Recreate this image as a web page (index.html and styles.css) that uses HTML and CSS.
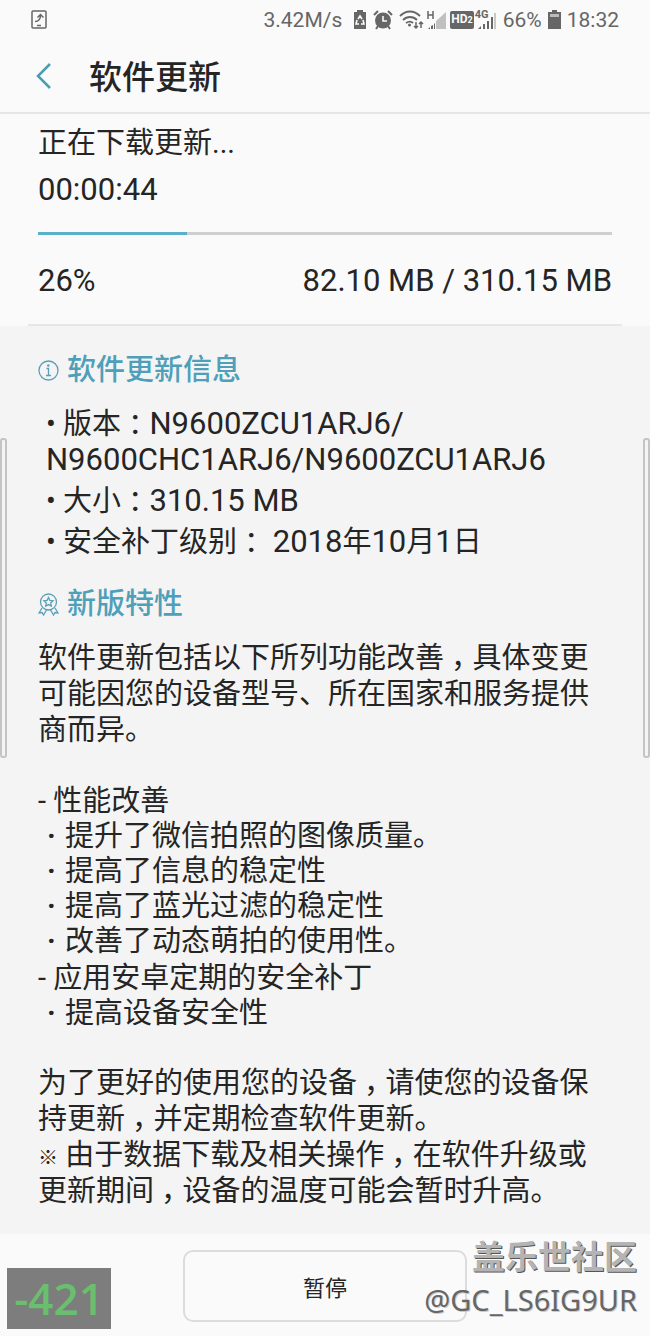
FILE: index.html
```html
<!DOCTYPE html>
<html lang="zh-CN">
<head>
    <meta charset="UTF-8">
    <meta name="viewport" content="width=device-width, initial-scale=1.0">
    <title>软件更新</title>
    <link rel="stylesheet" href="styles.css">
</head>
<body>
    <div class="status-bar">
        <svg class="status-left" width="16" height="20" viewBox="0 0 16 20" fill="none" stroke="#666" stroke-width="1.5">
            <rect x="1" y="1" width="14" height="17" rx="1"/>
            <path d="M4 11.500c4 0 5.500-2 5.500-6.500M6.500 7.500l3-3 3 3M6 15.500h4"/>
        </svg>
        <span>3.42M/s</span>
        <svg class="battery-saver" width="14" height="20" viewBox="0 0 14 20">
            <path fill="#666" d="M4 0h6v2h3v17H1V2h3z"/>
            <path fill="none" stroke="#fafafa" stroke-width="1.6" d="M5 9l2-3 2 3M4 10l-1 4h3M10 10l1 4H8"/>
        </svg>
        <svg class="alarm" width="20" height="20" viewBox="0 0 20 20">
            <circle cx="10" cy="10.500" r="8" fill="#666"/>
            <path fill="none" stroke="#666" stroke-width="2" d="M1 5l4-4M19 5l-4-4M5 16l-2 3M15 16l2 3"/>
            <path fill="none" stroke="#fafafa" stroke-width="1.6" d="M10 6v5h4"/>
        </svg>
        <svg class="wifi" width="25" height="20" viewBox="0 0 25 20" fill="none" stroke="#666" stroke-width="1.8">
            <path d="M1 6c6-6 14-6 20 0M4 10c4-4 10-4 14 0M7 13c3-2 5-2 7 0"/>
            <circle cx="10.500" cy="15" r="1.500" fill="#666" stroke="none"/>
            <path stroke-width="1.500" d="M17 12v6M15 16l2 2 2-2M22 18v-6M20 14l2-2 2 2"/>
        </svg>
        <svg class="signal-h" width="21" height="20" viewBox="0 0 21 20">
            <path fill="none" stroke="#666" stroke-width="1.5" d="M2 1v8M7 1v8M2 5h5"/>
            <path fill="#666" d="M2 19l2-2v2zM5 19v-3l2-1v4zM8 19v-5l1-1v6z"/>
            <path fill="#c0c0c0" d="M10 19V11L20 2v17z"/>
        </svg>
        <span class="hd">HD<small>2</small></span>
        <span class="net">
            <span class="net-label">4G</span>
            <svg width="22" height="20" viewBox="0 0 22 20">
                <path fill="#666" d="M3 19l3-3v3zM8 19v-5h2v5zM12 19v-8h2v8zM16 19V7h2v12z"/>
                <path fill="#c8c8c8" d="M19 19V3h2v16z"/>
            </svg>
        </span>
        <span class="percent">66%</span>
        <svg class="battery" width="13" height="20" viewBox="0 0 13 20">
            <path fill="#666" d="M4 0h5v2h4v17H0V2h4z"/>
            <path fill="#bbb" d="M2 4h9v3H2z"/>
        </svg>
        <span>18:32</span>
    </div>

    <header>
        <a href="#" class="back" aria-label="返回">
            <svg width="16" height="26" viewBox="0 0 16 26" fill="none" stroke="#4a9cb0" stroke-width="2.500"><path d="M14 1L2 13l12 12"/></svg>
        </a>
        <h1>软件更新</h1>
    </header>

    <section class="download">
        <div class="state">正在下载更新...</div>
        <div class="time">00:00:44</div>
        <div class="progress"><div class="progress-fill" style="width: 26%"></div></div>
        <div class="amounts">
            <span>26%</span>
            <span>82.10 MB / 310.15 MB</span>
        </div>
    </section>

    <main>
        <h2>
            <svg width="21" height="21" viewBox="0 0 21 21" fill="none" stroke="#5a9fb8" stroke-width="1.3">
                <circle cx="10.500" cy="10.500" r="9.500"/>
                <path d="M8.500 8.500h2v7M8 15.500h5"/>
                <circle cx="10.300" cy="5.500" r=".6" fill="#5a9fb8"/>
            </svg>
            软件更新信息
        </h2>
        <ul class="info">
            <li>• 版本<span class="punct">：</span><span class="num">N9600ZCU1ARJ6/</span><br><span class="num">N9600CHC1ARJ6/N9600ZCU1ARJ6</span></li>
            <li>• 大小<span class="punct">：</span><span class="num">310.15 MB</span></li>
            <li>• 安全补丁级别<span class="punct">：</span> <span class="num">2018</span>年<span class="num">10</span>月<span class="num">1</span>日</li>
        </ul>

        <h2>
            <svg width="21" height="23" viewBox="0 0 21 23" fill="none" stroke="#5a9fb8" stroke-width="1.3">
                <circle cx="10.500" cy="9" r="8"/>
                <path d="M10.500 4.500l1.400 2.900 3.100.4-2.300 2.200.6 3.100-2.800-1.500-2.800 1.500.6-3.100L6 7.800l3.100-.4z"/>
                <path d="M4 15l-3 5 3-.5L5.500 22l3-5M17 15l3 5-3-.5-1.500 2.500-3-5"/>
            </svg>
            新版特性
        </h2>
        <p>软件更新包括以下所列功能改善<span class="punct">，</span>具体变更可能因您的设备型号、所在国家和服务提供商而异。</p>
        <div class="changes">
            <h3>- 性能改善</h3>
            <ul>
                <li>提升了微信拍照的图像质量。</li>
                <li>提高了信息的稳定性</li>
                <li>提高了蓝光过滤的稳定性</li>
                <li>改善了动态萌拍的使用性。</li>
            </ul>
        </div>
        <div class="changes">
            <h3>- 应用安卓定期的安全补丁</h3>
            <ul>
                <li>提高设备安全性</li>
            </ul>
        </div>
        <p class="note">为了更好的使用您的设备<span class="punct">，</span>请使您的设备保持更新<span class="punct">，</span>并定期检查软件更新。<br><span class="mark">※</span> 由于数据下载及相关操作<span class="punct">，</span>在软件升级或更新期间<span class="punct">，</span>设备的温度可能会暂时升高。</p>
    </main>

    <footer>
        <button type="button">暂停</button>
        <div class="counter">-421</div>
        <div class="watermark">
            <div class="site">盖乐世社区</div>
            <div class="user">@GC_LS6IG9UR</div>
        </div>
    </footer>

    <div class="edge edge-left"></div>
    <div class="edge edge-right"></div>
</body>
</html>
```
FILE: styles.css
```css
* {
    box-sizing: border-box;
}
body {
    margin: 0;
    position: relative;
    overflow-x: hidden;
    background: #fafafa;
    color: #252525;
    font-family: Roboto, "Noto Sans CJK SC", sans-serif;
    font-size: 29px;
    line-height: 36px;
}
h1, h2, h3, p, ul {
    margin: 0;
    padding: 0;
}
ul {
    list-style: none;
}
svg {
    display: block;
    flex: none;
}

/* Status bar */
.status-bar {
    display: flex;
    align-items: center;
    height: 40px;
    padding: 0 31px;
    font-size: 21px;
    color: #666;
}
.status-left {
    margin-right: auto;
}
.battery-saver {
    margin-left: 11px;
}
.alarm {
    margin-left: 6px;
}
.wifi {
    margin-left: 6px;
}
.signal-h {
    margin-left: 2px;
}
.hd {
    margin-left: 3px;
    padding: 0 1px;
    border-radius: 2px;
    background: #666;
    color: #fafafa;
    font-size: 12px;
    font-weight: bold;
    line-height: 17px;
}
.hd small {
    font-size: 9px;
}
.net {
    position: relative;
    margin-left: 1px;
}
.net-label {
    position: absolute;
    top: 0;
    left: 0;
    font-size: 11px;
    font-weight: bold;
    line-height: 10px;
}
.percent {
    margin: 0 6px;
}
.battery {
    margin-right: 6px;
}

/* Title */
header {
    display: flex;
    align-items: center;
    height: 74px;
    padding-left: 36px;
    border-bottom: 2px solid #e6e6e6;
}
.back {
    width: 53px;
}
h1 {
    padding-top: 4px;
    font-size: 33px;
    font-weight: 500;
}

/* Download progress */
.download {
    margin: 0 28px;
    padding: 11px 10px 0;
    height: 212px;
    border-bottom: 2px solid #e6e6e6;
}
.time, .amounts, .num {
    font-size: 31px;
}
.time {
    margin-top: 11px;
}
.progress {
    height: 3px;
    margin: 24px 0 28px;
    background: #cfcfcf;
}
.progress-fill {
    height: 3px;
    background: #5bb0c9;
}
.amounts {
    display: flex;
    justify-content: space-between;
}

/* Update details */
main {
    padding: 26px 38px 25px;
    background: #f4f4f4;
}
h2 {
    display: flex;
    align-items: center;
    gap: 8px;
    font-size: 29px;
    font-weight: 500;
    color: #4f9fb9;
}
.info {
    padding-left: 8px;
    margin: 18px 0 26px;
}
.info li {
    margin-bottom: 5px;
}
/* half-width punctuation centred in a full-width cell */
.punct {
    padding: 0 7px;
    font-family: "Noto Sans CJK SC", sans-serif;
    font-feature-settings: "halt";
}
.num, .punct, .mark {
    line-height: 20px;
}
.mark {
    font-size: 20px;
    font-weight: bold;
}
h2 + p {
    margin: 18px 0 36px;
}
h3 {
    font-size: 29px;
    font-weight: normal;
}
.changes {
    line-height: 35px;
    margin-bottom: 2px;
}
.changes ul {
    padding-left: 9px;
}
.changes li::before {
    content: "·";
    display: inline-block;
    width: 18px;
    font-weight: bold;
}
.note {
    margin-top: 34px;
}

/* Footer */
footer {
    position: relative;
    display: flex;
    justify-content: center;
    padding: 16px 0 14px;
}
button {
    width: 284px;
    height: 72px;
    border: 2px solid #dcdcdc;
    border-radius: 10px;
    background: #fafafa;
    color: #252525;
    font-family: inherit;
    font-size: 22px;
}
.counter {
    position: absolute;
    left: 7px;
    bottom: 7px;
    width: 104px;
    background: #7d7d7d;
    color: #6abf6e;
    font-family: "Open Sans", "Noto Sans", sans-serif;
    font-size: 44px;
    font-weight: 600;
    line-height: 61px;
    text-align: center;
}
.watermark {
    position: absolute;
    right: 13px;
    bottom: 15px;
    text-align: right;
    color: #b4b4b4;
    text-shadow: 1px 1px 0 #555;
}
.site {
    font-size: 33px;
    font-weight: bold;
    line-height: 42px;
}
.user {
    color: #666;
    font-family: "Noto Sans", sans-serif;
    font-size: 29px;
    line-height: 42px;
    text-shadow: 1px 1px 0 #ccc;
}

/* Edge panel handles */
.edge {
    position: absolute;
    top: 438px;
    width: 7px;
    height: 320px;
    border: 2px solid #c4c4c4;
    border-radius: 3px;
    background: #f4f4f4;
}
.edge-left {
    left: 0;
}
.edge-right {
    right: 0;
}
```
